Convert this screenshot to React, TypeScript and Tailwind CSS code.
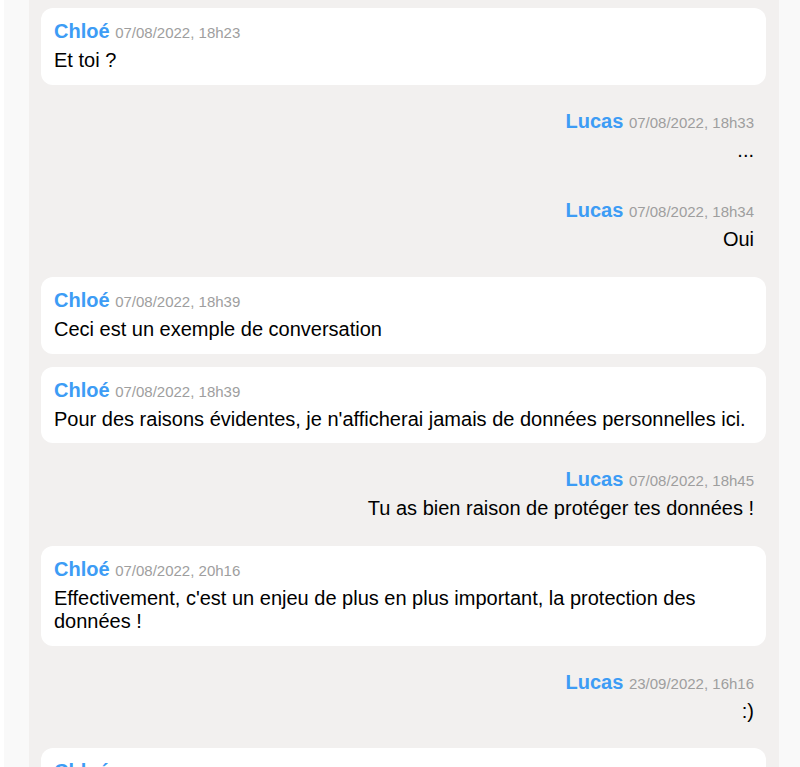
import React from "react";

type Message = {
  author: "Chloé" | "Lucas";
  date: string;
  text: string;
};

const messages: Message[] = [
  { author: "Chloé", date: "07/08/2022, 18h23", text: "Et toi ?" },
  { author: "Lucas", date: "07/08/2022, 18h33", text: "..." },
  { author: "Lucas", date: "07/08/2022, 18h34", text: "Oui" },
  { author: "Chloé", date: "07/08/2022, 18h39", text: "Ceci est un exemple de conversation" },
  {
    author: "Chloé",
    date: "07/08/2022, 18h39",
    text: "Pour des raisons évidentes, je n'afficherai jamais de données personnelles ici.",
  },
  { author: "Lucas", date: "07/08/2022, 18h45", text: "Tu as bien raison de protéger tes données !" },
  {
    author: "Chloé",
    date: "07/08/2022, 20h16",
    text: "Effectivement, c'est un enjeu de plus en plus important, la protection des données !",
  },
  { author: "Lucas", date: "23/09/2022, 16h16", text: ":)" },
  { author: "Chloé", date: "23/09/2022, 16h20", text: "Bonne soirée !" },
];

const MessageItem = ({ message }: { message: Message }) => {
  const mine = message.author === "Lucas";
  return (
    <div
      className={`${
        mine ? "text-right" : "bg-white"
      } rounded-[12px] pl-[13px] pr-[12px] pt-[12px] pb-[12.67px]`}
    >
      <div className="h-[23px] text-[20px] leading-[23px]">
        <span className="font-bold text-[#3d9cf5]">{message.author}</span>{" "}
        <span className="text-[15px] text-[#9e9e9e]">{message.date}</span>
      </div>
      <p className="mt-[6px] text-[20px] leading-[23px] text-black">{message.text}</p>
    </div>
  );
};

export default function App() {
  return (
    <div
      className="min-h-screen bg-white pl-[4px]"
      style={{ fontFamily: '"Liberation Sans", Arial, sans-serif' }}
    >
      <div className="min-h-screen bg-[#f9f9f9] pl-[25px]">
        <div className="flex w-[750px] flex-col gap-[13px] bg-[#f2f0ef] pl-[12px] pr-[13px] pt-[8px] pb-[13px]">
          {messages.map((m, i) => (
            <MessageItem key={i} message={m} />
          ))}
        </div>
      </div>
    </div>
  );
}
